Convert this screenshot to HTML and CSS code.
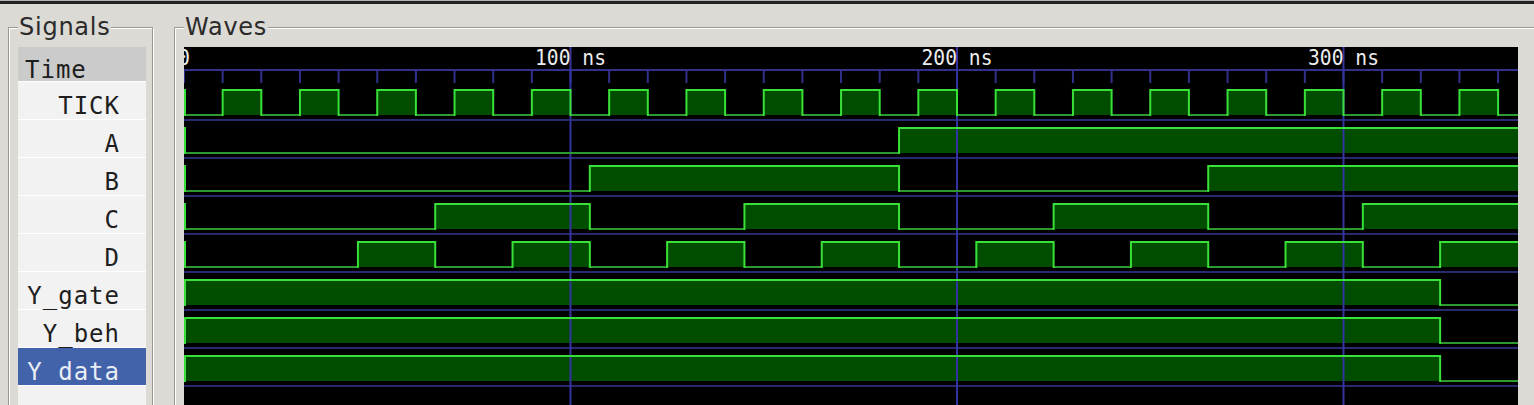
FILE: index.html
```html
<!DOCTYPE html>
<html lang="en">
<head>
<meta charset="utf-8">
<title>GTKWave - Signals and Waves</title>
<link rel="stylesheet" href="styles.css">
</head>
<body>
<div class="topbar"></div>
<div class="main">
  <fieldset class="frame signals">
    <legend>Signals</legend>
    <div class="list">
      <div class="hdr">Time</div>
      <div class="row"><span class="nm">TICK</span></div>
      <div class="row"><span class="nm">A</span></div>
      <div class="row"><span class="nm">B</span></div>
      <div class="row"><span class="nm">C</span></div>
      <div class="row"><span class="nm">D</span></div>
      <div class="row"><span class="nm">Y_gate</span></div>
      <div class="row"><span class="nm">Y_beh</span></div>
      <div class="row sel"><span class="nm">Y data</span></div>
    </div>
  </fieldset>
  <fieldset class="frame waves">
    <legend>Waves</legend>
    <div class="canvas">
      <svg id="wv" class="wv" width="1334" height="370" viewBox="0 0 1334 370" xmlns="http://www.w3.org/2000/svg"></svg>
    </div>
  </fieldset>
</div>
<script src="app.js"></script>
</body>
</html>
```

FILE: styles.css
```css
* { box-sizing: border-box; }
html, body { margin: 0; height: 100%; }
body {
  background: #dcdad5;
  overflow: hidden;
  font-family: "DejaVu Sans", sans-serif;
}
.topbar {
  height: 4px;
  background: #232323;
  border-top: 1px solid #b4b3ae;
}
.main {
  display: flex;
  align-items: flex-start;
  gap: 21px;
  padding-left: 8px;
  margin-top: 9px;
}
.frame {
  margin: 0;
  min-width: 0;
  height: 430px;
  padding: 5px 6px 0 9px;
  border: 1px solid #9b9994;
  box-shadow: inset 1px 1px 0 #ffffff, 1px 1px 0 #ffffff;
}
.frame legend {
  padding: 2px 1px 2px 1px;
  font-size: 24px;
  line-height: 25px;
  letter-spacing: 0.75px;
  color: #2b2b2b;
  background: #dcdad5;
}
.signals { width: 145px; flex: none; }
.waves { flex: 1; margin-right: -40px; }

.list {
  background: #f2f2f2;
  height: 420px;
  font-family: "DejaVu Sans Mono", monospace;
  font-size: 24px;
  letter-spacing: 1px;
  color: #1e1e1e;
}
.hdr {
  height: 35px;
  background: #cbcbcb;
  border-bottom: 1px solid #ffffff;
  padding: 13px 0 0 7px;
  line-height: 21px;
}
.row {
  height: 38px;
  border-bottom: 1px solid #ffffff;
  padding: 12px 0 0 7px;
  line-height: 25px;
}
.row .nm {
  display: inline-block;
  width: 95px;
  text-align: right;
  white-space: pre;
}
.row.sel {
  background: #4262a9;
  color: #e8edf6;
}

.canvas {
  width: 1334px;
  height: 370px;
  background: #000000;
  overflow: hidden;
}
.wv { display: block; }
.wv .fill { fill: #004d00; }
.wv .hi { fill: #38e038; }
.wv .lo { fill: #2c9a2c; }
.wv .grid { fill: #31318c; }
.wv .sep { fill: #29296f; }
.wv .major { fill: #3434a0; }
.wv .lbl {
  font-family: "DejaVu Sans Mono", monospace;
  font-size: 21px;
  fill: #ececec;
}
```

FILE: app.js
```js
(function () {
  var S = 3.865, W = 1334, H = 370, END = 400;
  var NS = 'http://www.w3.org/2000/svg';
  var svg = document.getElementById('wv');
  function X(t) { return t * S; }
  function rect(cls, x, y, w, h) {
    var r = document.createElementNS(NS, 'rect');
    r.setAttribute('class', cls);
    r.setAttribute('x', x.toFixed(2));
    r.setAttribute('y', y);
    r.setAttribute('width', Math.max(0, w).toFixed(2));
    r.setAttribute('height', h);
    svg.appendChild(r);
  }
  function label(str, t, len) {
    var tx = document.createElementNS(NS, 'text');
    tx.setAttribute('class', 'lbl');
    tx.setAttribute('x', X(t).toFixed(2));
    tx.setAttribute('y', 18);
    tx.setAttribute('text-anchor', 'middle');
    tx.setAttribute('textLength', len);
    tx.setAttribute('lengthAdjust', 'spacingAndGlyphs');
    tx.textContent = str;
    svg.appendChild(tx);
  }

  var tick = [];
  for (var k = 0; k < 18; k++) tick.push([10 + 20 * k, 20 + 20 * k]);
  var rows = [
    tick,
    [[185, END]],
    [[105, 185], [265, END]],
    [[65, 105], [145, 185], [225, 265], [305, END]],
    [[45, 65], [85, 105], [125, 145], [165, 185], [205, 225], [245, 265], [285, 305], [325, END]],
    [[0, 325]],
    [[0, 325]],
    [[0, 325]]
  ];

  var fills = [], lows = [], highs = [], edges = [];
  rows.forEach(function (iv, k) {
    var hy = 43 + 38 * k, ly = 68 + 38 * k, prev = 0;
    edges.push([0, hy, ly]);
    iv.forEach(function (p) {
      var s = p[0], e = p[1];
      if (s > prev) lows.push([prev, s, ly]);
      fills.push([s, e, hy, ly]);
      highs.push([s, e, hy]);
      if (s > 0) edges.push([s, hy, ly]);
      if (e < END) edges.push([e, hy, ly]);
      prev = e;
    });
    if (prev < END) lows.push([prev, END, ly]);
  });

  fills.forEach(function (f) { rect('fill', X(f[0]), f[2], X(f[1]) - X(f[0]), f[3] - f[2]); });

  rect('grid', 0, 22, W, 2);
  for (var t = 0; t <= 340; t += 10) rect('grid', Math.max(0, X(t) - 1), 23, t === 0 ? 1 : 2, 13);
  for (var r = 0; r < 8; r++) rect('sep', 0, 72 + 38 * r, W, 2);
  [100, 200, 300].forEach(function (m) { rect('major', X(m) - 1, 0, 2, H); });

  lows.forEach(function (l) { rect('lo', X(l[0]), l[2] - 1, X(l[1]) - X(l[0]), 2); });
  highs.forEach(function (h) { rect('hi', X(h[0]), h[2] - 1, X(h[1]) - X(h[0]), 2); });
  edges.forEach(function (e) {
    var x = e[0] === 0 ? 0 : X(e[0]) - 1;
    rect('hi', x, e[1] - 1, 2, e[2] - e[1] + 2);
  });

  label('0', 0, 12);
  label('100 ns', 100, 71);
  label('200 ns', 200, 71);
  label('300 ns', 300, 71);
})();
```
